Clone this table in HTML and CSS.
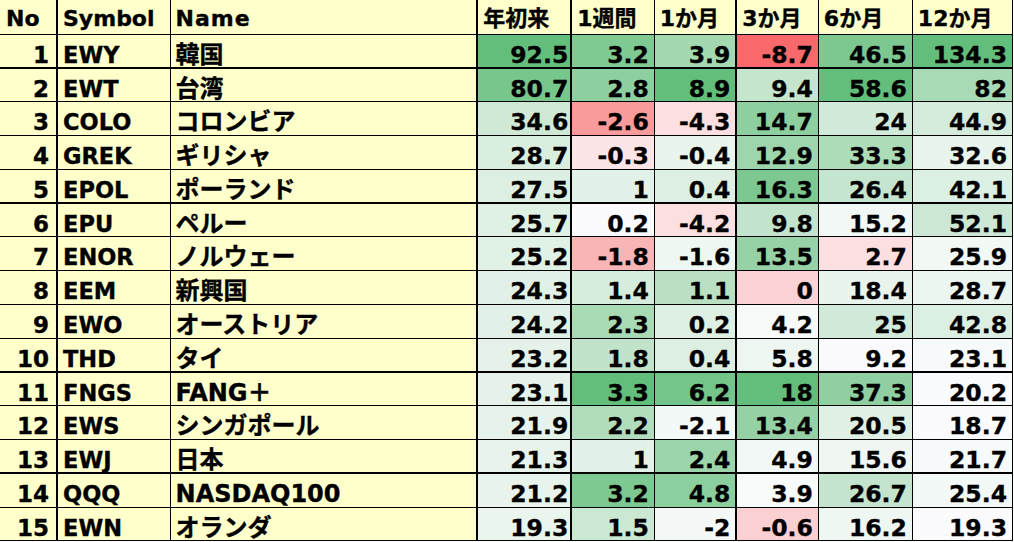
FILE: index.html
```html
<!DOCTYPE html>
<html lang="ja">
<head>
<meta charset="utf-8">
<title>ETF ranking</title>
<link rel="stylesheet" href="styles.css">
</head>
<body>
<table class="sheet">
  <colgroup>
    <col class="c-no"><col class="c-sym"><col class="c-name">
    <col class="c-ytd"><col class="c-w1"><col class="c-m1"><col class="c-m3"><col class="c-m6"><col class="c-m12">
  </colgroup>
  <thead>
    <tr class="head">
      <th class="no-h">No</th><th>Symbol</th><th class="name-h">Name</th>
      <th class="ytd">年初来</th><th>1週間</th><th class="m1">1か月</th><th>3か月</th><th>6か月</th><th>12か月</th>
    </tr>
  </thead>
  <tbody>
    <tr class="thick"><td class="no">1</td><td class="sym">EWY</td><td class="name">韓国</td>
      <td class="num ytd" style="background:#63be7b">92.5</td><td class="num" style="background:#7fca93">3.2</td><td class="num m1" style="background:#a4d8b1">3.9</td><td class="num" style="background:#f8696b">-8.7</td><td class="num" style="background:#7cc890">46.5</td><td class="num" style="background:#63be7b">134.3</td></tr>
    <tr><td class="no">2</td><td class="sym">EWT</td><td class="name">台湾</td>
      <td class="num ytd" style="background:#77c68c">80.7</td><td class="num" style="background:#8ecfa0">2.8</td><td class="num m1" style="background:#63be7b">8.9</td><td class="num" style="background:#c5e5cd">9.4</td><td class="num" style="background:#63be7b">58.6</td><td class="num" style="background:#a8dab5">82</td></tr>
    <tr><td class="no">3</td><td class="sym">COLO</td><td class="name">コロンビア</td>
      <td class="num ytd" style="background:#cfe9d6">34.6</td><td class="num" style="background:#f99a9b">-2.6</td><td class="num m1" style="background:#fcdfe1">-4.3</td><td class="num" style="background:#8dcf9f">14.7</td><td class="num" style="background:#d1eada">24</td><td class="num" style="background:#d5ecdc">44.9</td></tr>
    <tr><td class="no">4</td><td class="sym">GREK</td><td class="name">ギリシャ</td>
      <td class="num ytd" style="background:#d9eedf">28.7</td><td class="num" style="background:#fce5e7">-0.3</td><td class="num m1" style="background:#e8f4ec">-0.4</td><td class="num" style="background:#9dd5ac">12.9</td><td class="num" style="background:#addcb9">33.3</td><td class="num" style="background:#e8f4ec">32.6</td></tr>
    <tr class="thick"><td class="no">5</td><td class="sym">EPOL</td><td class="name">ポーランド</td>
      <td class="num ytd" style="background:#dcefe2">27.5</td><td class="num" style="background:#e3f2e8">1</td><td class="num m1" style="background:#dcefe2">0.4</td><td class="num" style="background:#7cc890">16.3</td><td class="num" style="background:#c6e5cf">26.4</td><td class="num" style="background:#dcefe3">42.1</td></tr>
    <tr><td class="no">6</td><td class="sym">EPU</td><td class="name">ペルー</td>
      <td class="num ytd" style="background:#dff0e4">25.7</td><td class="num" style="background:#fbfafd">0.2</td><td class="num m1" style="background:#fcdfe1">-4.2</td><td class="num" style="background:#c3e4cc">9.8</td><td class="num" style="background:#f2f8f5">15.2</td><td class="num" style="background:#cce8d4">52.1</td></tr>
    <tr><td class="no">7</td><td class="sym">ENOR</td><td class="name">ノルウェー</td>
      <td class="num ytd" style="background:#e0f1e5">25.2</td><td class="num" style="background:#f9b4b6">-1.8</td><td class="num m1" style="background:#eef7f1">-1.6</td><td class="num" style="background:#97d2a7">13.5</td><td class="num" style="background:#fcdfe1">2.7</td><td class="num" style="background:#f2f9f5">25.9</td></tr>
    <tr><td class="no">8</td><td class="sym">EEM</td><td class="name">新興国</td>
      <td class="num ytd" style="background:#e2f1e7">24.3</td><td class="num" style="background:#d6ecdc">1.4</td><td class="num m1" style="background:#b9e0c3">1.1</td><td class="num" style="background:#fbd3d6">0</td><td class="num" style="background:#e9f4ed">18.4</td><td class="num" style="background:#ecf6f0">28.7</td></tr>
    <tr><td class="no">9</td><td class="sym">EWO</td><td class="name">オーストリア</td>
      <td class="num ytd" style="background:#e2f1e7">24.2</td><td class="num" style="background:#a8dab4">2.3</td><td class="num m1" style="background:#deefe3">0.2</td><td class="num" style="background:#f6faf9">4.2</td><td class="num" style="background:#d1ead9">25</td><td class="num" style="background:#dcefe3">42.8</td></tr>
    <tr class="thick"><td class="no">10</td><td class="sym">THD</td><td class="name">タイ</td>
      <td class="num ytd" style="background:#e4f2e9">23.2</td><td class="num" style="background:#c0e3c9">1.8</td><td class="num m1" style="background:#dcefe2">0.4</td><td class="num" style="background:#eef6f1">5.8</td><td class="num" style="background:#fbfbfe">9.2</td><td class="num" style="background:#f6fafa">23.1</td></tr>
    <tr><td class="no">11</td><td class="sym">FNGS</td><td class="name">FANG＋</td>
      <td class="num ytd" style="background:#e4f2e9">23.1</td><td class="num" style="background:#63be7b">3.3</td><td class="num m1" style="background:#74c589">6.2</td><td class="num" style="background:#63be7b">18</td><td class="num" style="background:#8fcfa1">37.3</td><td class="num" style="background:#fafbfd">20.2</td></tr>
    <tr><td class="no">12</td><td class="sym">EWS</td><td class="name">シンガポール</td>
      <td class="num ytd" style="background:#e6f3ea">21.9</td><td class="num" style="background:#b1ddbd">2.2</td><td class="num m1" style="background:#f3f9f6">-2.1</td><td class="num" style="background:#96d1a6">13.4</td><td class="num" style="background:#e0f0e5">20.5</td><td class="num" style="background:#fbfbfe">18.7</td></tr>
    <tr class="thick"><td class="no">13</td><td class="sym">EWJ</td><td class="name">日本</td>
      <td class="num ytd" style="background:#e7f3eb">21.3</td><td class="num" style="background:#e3f2e8">1</td><td class="num m1" style="background:#9cd5ab">2.4</td><td class="num" style="background:#f2f8f5">4.9</td><td class="num" style="background:#f0f7f3">15.6</td><td class="num" style="background:#f6fafa">21.7</td></tr>
    <tr><td class="no">14</td><td class="sym">QQQ</td><td class="name">NASDAQ100</td>
      <td class="num ytd" style="background:#e7f3eb">21.2</td><td class="num" style="background:#7ec991">3.2</td><td class="num m1" style="background:#8ccf9e">4.8</td><td class="num" style="background:#f7fbfa">3.9</td><td class="num" style="background:#c4e4cd">26.7</td><td class="num" style="background:#f3f9f6">25.4</td></tr>
    <tr><td class="no">15</td><td class="sym">EWN</td><td class="name">オランダ</td>
      <td class="num ytd" style="background:#eaf5ee">19.3</td><td class="num" style="background:#cbe8d3">1.5</td><td class="num m1" style="background:#f4f9f7">-2</td><td class="num" style="background:#fbd0d3">-0.6</td><td class="num" style="background:#eef7f1">16.2</td><td class="num" style="background:#fbfbfe">19.3</td></tr>
  </tbody>
</table>
</body>
</html>
```
FILE: styles.css
```css
html, body {
  margin: 0;
  padding: 0;
  background: #ffffff;
}
.sheet {
  border-collapse: collapse;
  table-layout: fixed;
  width: 1013px;
  font-family: "DejaVu Sans", "Noto Sans CJK JP", sans-serif;
  font-weight: bold;
  font-size: 23px;
  color: #000;
  background: #ffffcc;
  -webkit-text-stroke: 0.35px #000;
}
.c-no { width: 57px; }
.c-sym { width: 113px; }
.c-name { width: 307px; }
.c-ytd { width: 94px; }
.c-w1 { width: 83px; }
.c-m1 { width: 82px; }
.c-m3 { width: 82px; }
.c-m6 { width: 94px; }
.c-m12 { width: 100px; }

.sheet tr { height: 33.8px; }
.sheet .head { height: 34px; }
.sheet th, .sheet td {
  border: 1px solid #000;
  padding: 10px 5px 0 5px;
  white-space: nowrap;
  line-height: 20px;
  vertical-align: top;
}
.sheet th {
  text-align: left;
  font-weight: bold;
  font-size: 22px;
  border-top: none;
  padding-top: 9px;
}
.sheet th:first-child, .sheet td:first-child { border-left: none; }
.sheet .no-h { padding-left: 6px; }
.sheet .no { text-align: right; padding-right: 7px; border-right-width: 2px; }
.sheet .sym { font-size: 22.5px; }
.sheet .name { border-right-width: 2px; font-size: 24px; }
.sheet .num { text-align: right; font-size: 23.5px; }
.sheet .ytd { border-right-width: 2px; border-left-width: 2px; padding-right: 2px; }
.sheet .m1 { border-right-width: 2px; }
.sheet .head th:first-child { border-right-width: 2px; }
.sheet .head .name-h { border-right-width: 2px; letter-spacing: 1px; }
.sheet .head .ytd { padding-right: 5px; }
.sheet tr.thick td { border-bottom-width: 2px; }
```
